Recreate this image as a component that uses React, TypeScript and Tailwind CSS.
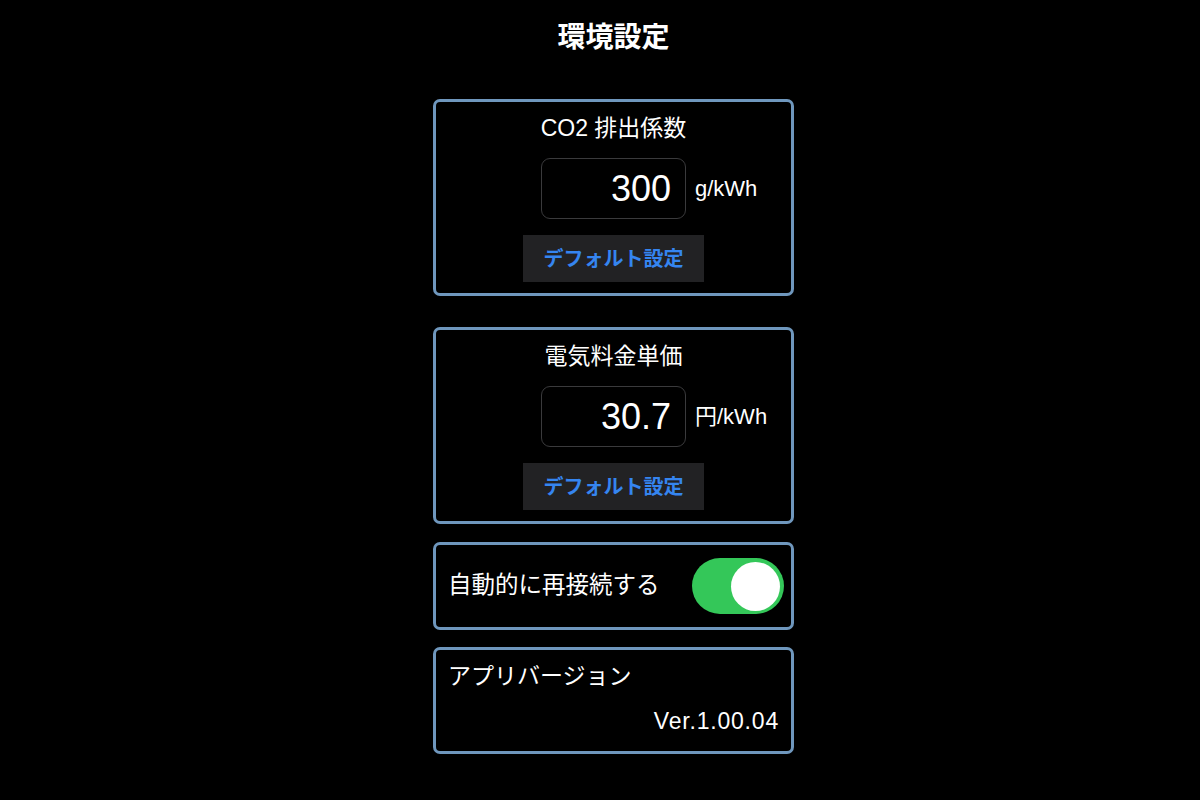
import { useState } from "react";

const font = { fontFamily: '"Liberation Sans", "Noto Sans CJK JP", sans-serif' };

const card = "w-[361px] rounded-[7px] border-[3px] border-[#6f97bd] bg-black";

function NumberSetting({ title, value, unit }: { title: string; value: string; unit: string }) {
  return (
    <div className={card + " flex h-[197px] flex-col items-center pt-[11px]"}>
      <p className="h-[30px] text-[23px] leading-[30px] text-white">{title}</p>
      <div className="mt-[15px] grid w-full grid-cols-[1fr_145px_1fr] items-center">
        <div />
        <div className="flex h-[61px] items-center justify-end rounded-[9px] border border-[#3a3a3c] pr-[14px] text-[36px] text-white">
          {value}
        </div>
        <span className="pl-[9px] text-[22px] text-white">{unit}</span>
      </div>
      <button className="mt-[16px] h-[47px] w-[181px] bg-[#222224] text-[20px] font-bold text-[#3585f0]">
        デフォルト設定
      </button>
    </div>
  );
}

export default function App() {
  const [on, setOn] = useState(true);

  return (
    <div style={font} className="flex min-h-[800px] w-full justify-center bg-black pl-[27px]">
      <div className="flex w-[361px] flex-col items-center">
        <h1 className="mt-[20px] h-[36px] text-[28px] font-bold leading-[36px] text-white">環境設定</h1>

        <div className="mt-[43px] flex flex-col">
          <NumberSetting title="CO2 排出係数" value="300" unit="g/kWh" />
          <div className="mt-[31px]">
            <NumberSetting title="電気料金単価" value="30.7" unit="円/kWh" />
          </div>

          <div className={card + " mt-[18px] flex h-[88px] items-center justify-between pl-[12px] pr-[7px]"}>
            <span className="text-[23.5px] text-white">自動的に再接続する</span>
            <button
              onClick={() => setOn(!on)}
              className={`flex h-[56px] w-[92px] items-center rounded-full px-[4px] ${on ? "justify-end bg-[#34c759]" : "justify-start bg-[#39393d]"}`}
            >
              <span className="h-[49px] w-[49px] rounded-full bg-white" />
            </button>
          </div>

          <div className={card + " mt-[17px] flex h-[107px] flex-col pl-[12px] pr-[12px] pt-[11px]"}>
            <span className="h-[30px] text-[23px] leading-[30px] text-white">アプリバージョン</span>
            <span className="mt-[15px] h-[30px] self-end text-[23px] leading-[30px] tracking-[0.8px] text-white">Ver.1.00.04</span>
          </div>
        </div>
      </div>
    </div>
  );
}
